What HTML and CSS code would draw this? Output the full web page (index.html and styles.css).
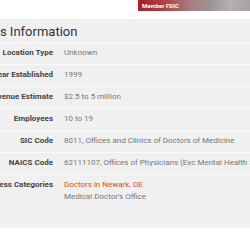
FILE: index.html
```html
<!DOCTYPE html>
<html>
<head>
<meta charset="utf-8">
<link rel="stylesheet" href="styles.css">
</head>
<body>
<div class="top">
  <div class="fdic">Member FDIC</div>
</div>
<section class="panel">
  <h2 class="title">Business Information</h2>
  <dl class="rows">
    <div class="row"><dt>Location Type</dt><dd>Unknown</dd></div>
    <div class="row"><dt>Year Established</dt><dd>1999</dd></div>
    <div class="row"><dt>Revenue Estimate</dt><dd>$2.5 to 5 million</dd></div>
    <div class="row"><dt>Employees</dt><dd>10 to 19</dd></div>
    <div class="row"><dt>SIC Code</dt><dd>8011, Offices and Clinics of Doctors of Medicine</dd></div>
    <div class="row"><dt>NAICS Code</dt><dd>62111107, Offices of Physicians (Exc Mental Health Specialists)</dd></div>
    <div class="row last"><dt>Business Categories</dt><dd><a class="link" href="#">Doctors in Newark, DE</a><br>Medical Doctor's Office</dd></div>
  </dl>
</section>
</body>
</html>
```
FILE: styles.css
```css
html, body {
  margin: 0;
  padding: 0;
  background: #fff;
  overflow: hidden;
  width: 250px;
  height: 250px;
}
body {
  font-family: Roboto, "Liberation Sans", sans-serif;
}
.top {
  display: flex;
  justify-content: flex-end;
  height: 19px;
}
.fdic {
  width: 112px;
  height: 11px;
  box-sizing: border-box;
  padding-left: 4px;
  font-size: 6px;
  font-weight: bold;
  line-height: 11px;
  color: #fff;
  background: linear-gradient(90deg, #a3222a 0%, #b23d44 22%, #a8797d 45%, #9d9496 65%, #b6b0b1 82%, #a6a0a1 100%);
}
.panel {
  background: #f0f0f0;
  margin-left: -40px;
  width: 500px;
  padding: 4px 0 20px;
}
.title {
  margin: 0 0 1px -6px;
  font-size: 13px;
  font-weight: normal;
  color: #333;
  line-height: 18px;
  white-space: nowrap;
}
.rows {
  margin: 0;
}
.row {
  display: grid;
  grid-template-columns: 93px 1fr;
  column-gap: 11px;
  border-top: 1px solid #fafafa;
  padding: 4px 0 5px;
  font-size: 8px;
  line-height: 12px;
}
dt {
  text-align: right;
  font-weight: bold;
  color: #444;
  white-space: nowrap;
}
dd {
  margin: 0;
  color: #777;
  white-space: nowrap;
}
.link {
  color: #d4522a;
  text-decoration: none;
}
```
